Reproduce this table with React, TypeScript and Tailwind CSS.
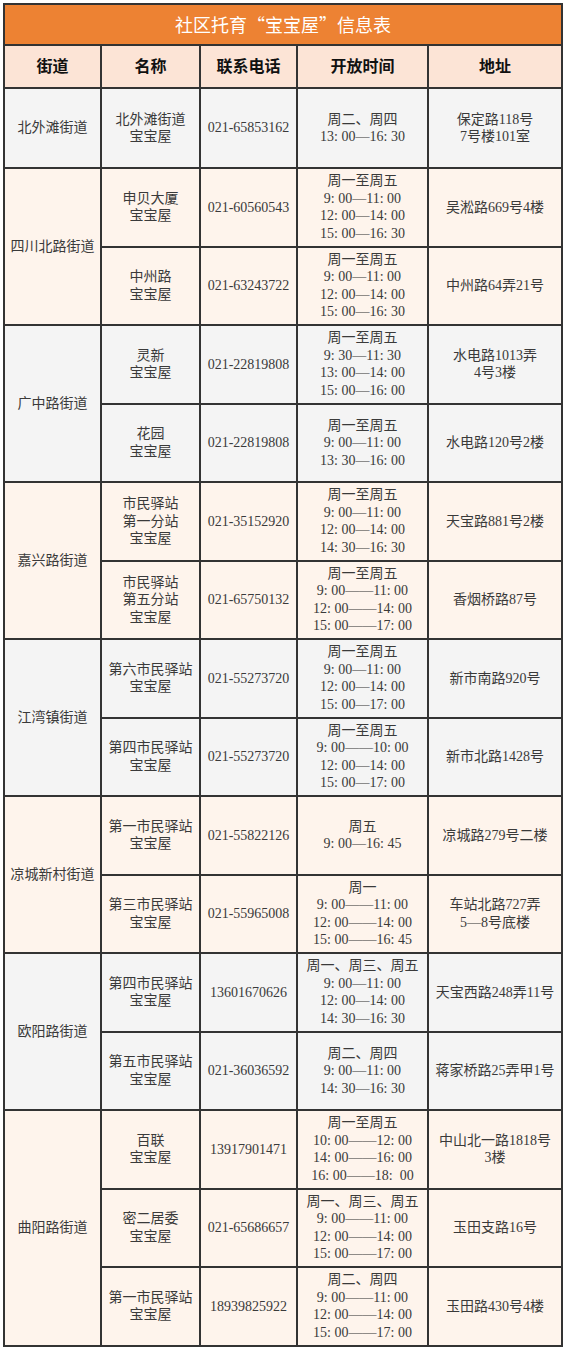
const groups = [
  {
    street: '北外滩街道',
    bg: 'bg-[#f4f4f4]',
    first: true,
    items: [
      {
        name: ['北外滩街道', '宝宝屋'],
        phone: '021-65853162',
        time: ['周二、周四', '13: 00—16: 30'],
        addr: ['保定路118号', '7号楼101室'],
      },
    ],
  },
  {
    street: '四川北路街道',
    bg: 'bg-[#fef4ec]',
    items: [
      {
        name: ['申贝大厦', '宝宝屋'],
        phone: '021-60560543',
        time: ['周一至周五', '9: 00—11: 00', '12: 00—14: 00', '15: 00—16: 30'],
        addr: ['吴淞路669号4楼'],
      },
      {
        name: ['中州路', '宝宝屋'],
        phone: '021-63243722',
        time: ['周一至周五', '9: 00—11: 00', '12: 00—14: 00', '15: 00—16: 30'],
        addr: ['中州路64弄21号'],
      },
    ],
  },
  {
    street: '广中路街道',
    bg: 'bg-[#f4f4f4]',
    items: [
      {
        name: ['灵新', '宝宝屋'],
        phone: '021-22819808',
        time: ['周一至周五', '9: 30—11: 30', '13: 00—14: 00', '15: 00—16: 00'],
        addr: ['水电路1013弄', '4号3楼'],
      },
      {
        name: ['花园', '宝宝屋'],
        phone: '021-22819808',
        time: ['周一至周五', '9: 00—11: 00', '13: 30—16: 00'],
        addr: ['水电路120号2楼'],
      },
    ],
  },
  {
    street: '嘉兴路街道',
    bg: 'bg-[#fef4ec]',
    items: [
      {
        name: ['市民驿站', '第一分站', '宝宝屋'],
        phone: '021-35152920',
        time: ['周一至周五', '9: 00—11: 00', '12: 00—14: 00', '14: 30—16: 30'],
        addr: ['天宝路881号2楼'],
      },
      {
        name: ['市民驿站', '第五分站', '宝宝屋'],
        phone: '021-65750132',
        time: ['周一至周五', '9: 00——11: 00', '12: 00——14: 00', '15: 00——17: 00'],
        addr: ['香烟桥路87号'],
      },
    ],
  },
  {
    street: '江湾镇街道',
    bg: 'bg-[#f4f4f4]',
    items: [
      {
        name: ['第六市民驿站', '宝宝屋'],
        phone: '021-55273720',
        time: ['周一至周五', '9: 00—11: 00', '12: 00—14: 00', '15: 00—17: 00'],
        addr: ['新市南路920号'],
      },
      {
        name: ['第四市民驿站', '宝宝屋'],
        phone: '021-55273720',
        time: ['周一至周五', '9: 00——10: 00', '12: 00—14: 00', '15: 00—17: 00'],
        addr: ['新市北路1428号'],
      },
    ],
  },
  {
    street: '凉城新村街道',
    bg: 'bg-[#fef4ec]',
    items: [
      {
        name: ['第一市民驿站', '宝宝屋'],
        phone: '021-55822126',
        time: ['周五', '9: 00—16: 45'],
        addr: ['凉城路279号二楼'],
      },
      {
        name: ['第三市民驿站', '宝宝屋'],
        phone: '021-55965008',
        time: ['周一', '9: 00——11: 00', '12: 00——14: 00', '15: 00——16: 45'],
        addr: ['车站北路727弄', '5—8号底楼'],
      },
    ],
  },
  {
    street: '欧阳路街道',
    bg: 'bg-[#f4f4f4]',
    items: [
      {
        name: ['第四市民驿站', '宝宝屋'],
        phone: '13601670626',
        time: ['周一、周三、周五', '9: 00—11: 00', '12: 00—14: 00', '14: 30—16: 30'],
        addr: ['天宝西路248弄11号'],
      },
      {
        name: ['第五市民驿站', '宝宝屋'],
        phone: '021-36036592',
        time: ['周二、周四', '9: 00—11: 00', '14: 30—16: 30'],
        addr: ['蒋家桥路25弄甲1号'],
      },
    ],
  },
  {
    street: '曲阳路街道',
    bg: 'bg-[#fef4ec]',
    items: [
      {
        name: ['百联', '宝宝屋'],
        phone: '13917901471',
        time: ['周一至周五', '10: 00——12: 00', '14: 00——16: 00', '16: 00——18:\u00a0\u00a000'],
        addr: ['中山北一路1818号', '3楼'],
      },
      {
        name: ['密二居委', '宝宝屋'],
        phone: '021-65686657',
        time: ['周一、周三、周五', '9: 00——11: 00', '12: 00——14: 00', '15: 00——17: 00'],
        addr: ['玉田支路16号'],
      },
      {
        name: ['第一市民驿站', '宝宝屋'],
        phone: '18939825922',
        time: ['周二、周四', '9: 00——11: 00', '12: 00——14: 00', '15: 00——17: 00'],
        addr: ['玉田路430号4楼'],
      },
    ],
  },
];

const cell = 'border-2 border-[#333] text-center align-middle px-0.5';

function Lines({ lines }: { lines: string[] }) {
  return (
    <>
      {lines.map((l, i) => (
        <div key={i} className="whitespace-nowrap">
          {l}
        </div>
      ))}
    </>
  );
}

export default function App() {
  return (
    <div className="bg-white w-[563px] min-h-[1350px] pt-[3px] pl-[3px]">
      <table className="border-collapse table-fixed w-[558px] font-['Liberation_Serif','Noto_Sans_CJK_SC',serif] text-[14px] leading-[17.5px] text-[#3a3a3a]">
        <colgroup>
          <col className="w-[97px]" />
          <col className="w-[99px]" />
          <col className="w-[97px]" />
          <col className="w-[131px]" />
          <col className="w-[134px]" />
        </colgroup>
        <tbody>
          <tr className="h-[41px]">
            <td
              colSpan={5}
              className={`${cell} bg-[#ed8233] text-white text-[18px] font-['Noto_Sans_CJK_SC',serif]`}
            >
              社区托育“宝宝屋”信息表
            </td>
          </tr>
          <tr className="h-[43px] bg-[#fce4d6] text-[16px] font-bold text-[#111]">
            <td className={cell}>街道</td>
            <td className={cell}>名称</td>
            <td className={cell}>联系电话</td>
            <td className={cell}>开放时间</td>
            <td className={cell}>地址</td>
          </tr>
          {groups.map((g) =>
            g.items.map((it, i) => (
              <tr key={g.street + i} className={`${g.bg} ${g.first ? 'h-[80px]' : 'h-[78.5px]'}`}>
                {i === 0 && (
                  <td rowSpan={g.items.length} className={cell}>
                    {g.street}
                  </td>
                )}
                <td className={cell}>
                  <Lines lines={it.name} />
                </td>
                <td className={cell}>{it.phone}</td>
                <td className={cell}>
                  <Lines lines={it.time} />
                </td>
                <td className={cell}>
                  <Lines lines={it.addr} />
                </td>
              </tr>
            ))
          )}
        </tbody>
      </table>
    </div>
  );
}
